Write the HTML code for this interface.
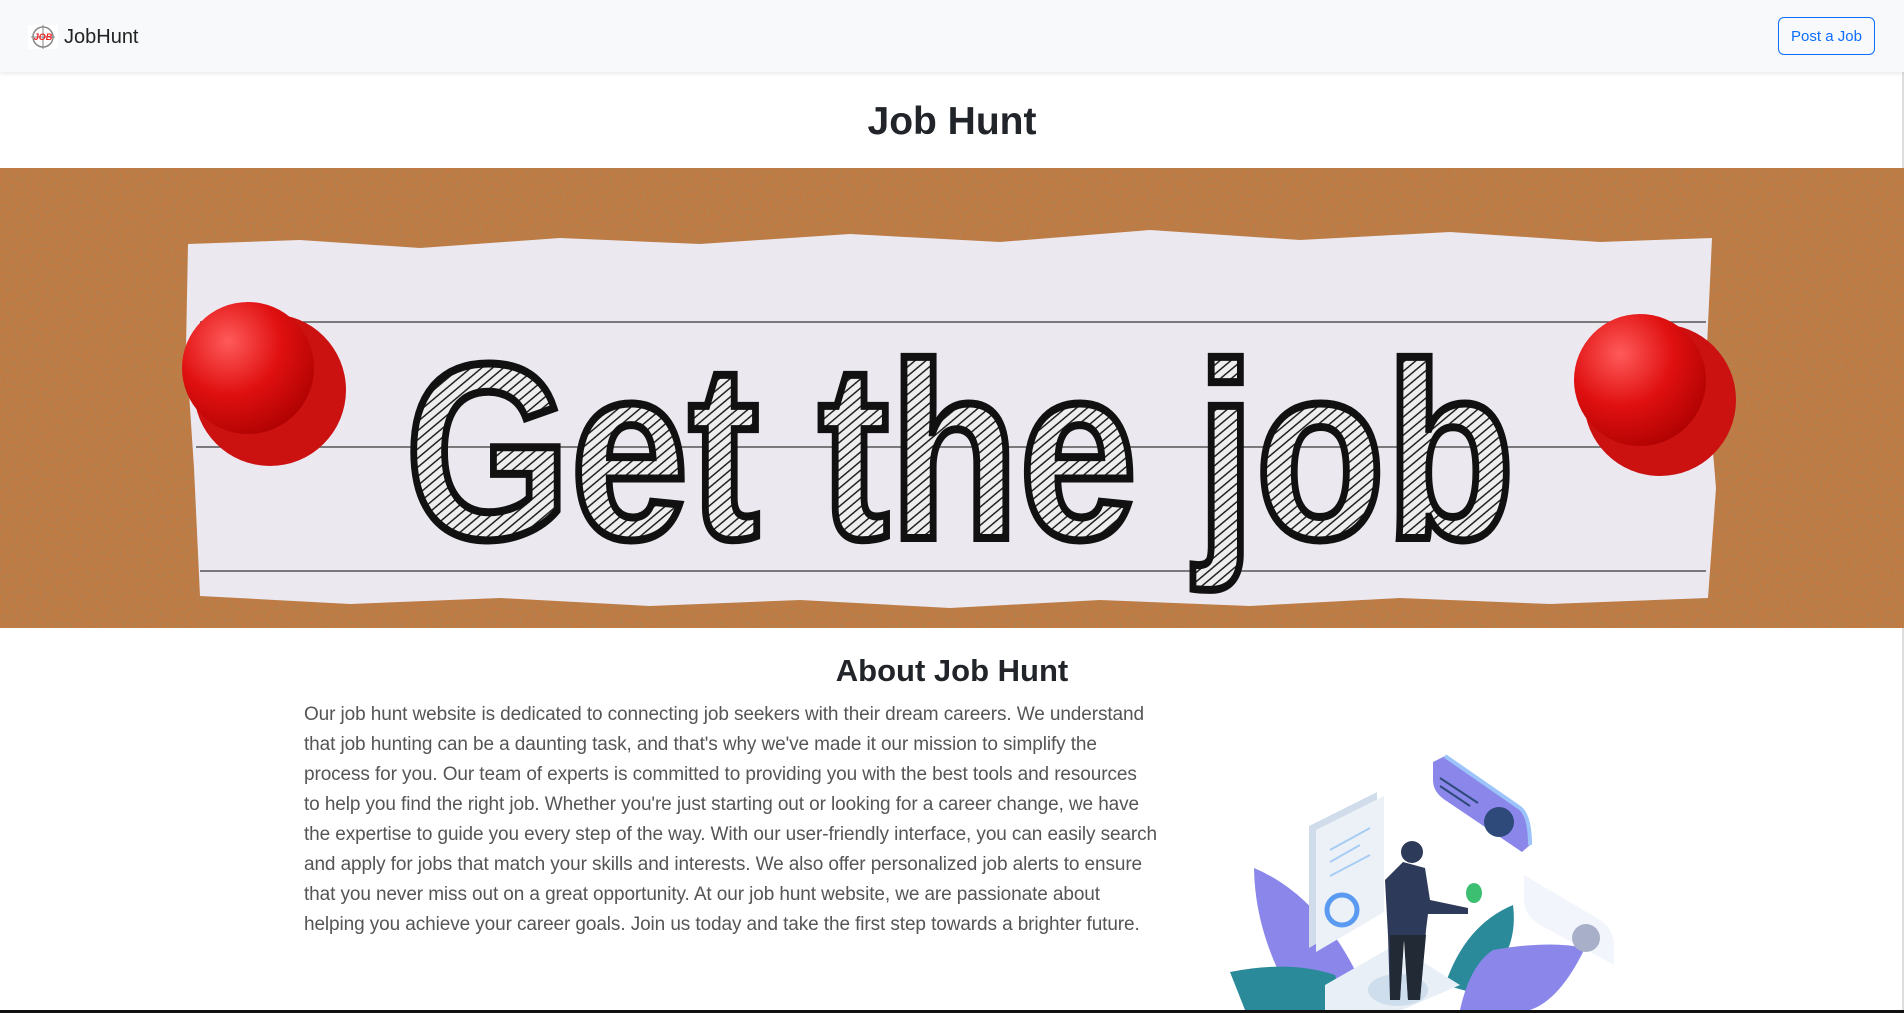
<!DOCTYPE html>
<html><head><meta charset="utf-8"><style>
*{box-sizing:border-box;margin:0;padding:0}
body{width:1904px;height:1013px;overflow:hidden;background:#fff;font-family:"Liberation Sans",sans-serif;color:#212529;position:relative;border-right:2px solid #ddd}
.nav{position:absolute;left:0;top:0;width:1904px;height:72px;background:#f8f9fa;box-shadow:0 2px 4px rgba(0,0,0,.08)}
.brand{position:absolute;left:28px;top:25px;display:flex;align-items:center;font-size:20px;color:#222}
.btn{position:absolute;left:1778px;top:17px;width:97px;height:38px;border:1px solid #0d6efd;border-radius:6px;color:#0d6efd;font-size:15px;display:flex;align-items:center;justify-content:center}
h1{position:absolute;top:97px;left:0;width:1904px;text-align:center;font-size:39px;font-weight:bold;line-height:50px}
.banner{position:absolute;top:168px;left:0}
h2{position:absolute;top:651px;left:292px;width:1320px;text-align:center;font-size:31px;font-weight:bold;line-height:40px}
.p{position:absolute;left:304px;top:700px;font-size:19px;line-height:30px;color:#555;white-space:nowrap;letter-spacing:-0.1px}
.ill{position:absolute;left:1220px;top:740px}
.bot{position:absolute;left:0;top:1010px;width:1904px;height:3px;background:#111}
</style></head><body>
<div class="nav">
 <div class="brand"><svg width="30" height="24" viewBox="0 0 30 24"><rect width="30" height="24" fill="#fff"/><circle cx="15" cy="12" r="10" fill="none" stroke="#888" stroke-width="1.5"/><line x1="15" y1="0" x2="15" y2="24" stroke="#888"/><line x1="3" y1="12" x2="27" y2="12" stroke="#888"/><text x="15" y="15" font-size="9" font-weight="bold" font-style="italic" fill="#e22" text-anchor="middle" font-family="Liberation Sans">JOB</text></svg><span style="margin-left:6px">JobHunt</span></div>
 <div class="btn">Post a Job</div>
</div>
<h1>Job Hunt</h1>
<svg class="banner" width="1904" height="460" viewBox="0 0 1904 460">
 <defs>
  <filter id="cork" x="0" y="0" width="100%" height="100%"><feTurbulence type="fractalNoise" baseFrequency="0.3" numOctaves="2" seed="3"/><feColorMatrix values="0 0 0 0 0.45  0 0 0 0 0.22  0 0 0 0 0.08  0 0 0 -2.2 1.4"/></filter>
  <pattern id="hatch" width="7" height="7" patternUnits="userSpaceOnUse" patternTransform="rotate(50)"><rect width="7" height="7" fill="#eee"/><line x1="0" y1="0" x2="0" y2="7" stroke="#222" stroke-width="3"/></pattern>
  <radialGradient id="pin" cx="0.35" cy="0.3" r="0.8"><stop offset="0" stop-color="#ff5a5a"/><stop offset="0.5" stop-color="#e01010"/><stop offset="1" stop-color="#a00"/></radialGradient>
 </defs>
 <rect width="1904" height="460" fill="#c07a42"/>
 <rect width="1904" height="460" filter="url(#cork)"/>
 <path d="M188 76 L300 72 L420 80 L560 70 L700 76 L850 66 L1000 74 L1150 62 L1300 72 L1450 64 L1600 74 L1712 70 L1706 200 L1716 320 L1708 430 L1550 436 L1400 430 L1250 438 L1100 432 L950 440 L800 432 L650 438 L500 430 L350 436 L200 428 L194 300 L186 180 Z" fill="#ece8f0"/>
 <g stroke="#555" stroke-width="1.5"><line x1="200" y1="154" x2="1706" y2="154"/><line x1="196" y1="279" x2="1710" y2="279"/><line x1="200" y1="403" x2="1706" y2="403"/></g>
 <text x="405" y="370" font-size="250" font-weight="bold" font-family="Liberation Sans" textLength="1110" lengthAdjust="spacingAndGlyphs" fill="url(#hatch)" stroke="#111" stroke-width="8">Get the job</text>
 <circle cx="270" cy="222" r="76" fill="#c11"/><circle cx="248" cy="200" r="66" fill="url(#pin)"/>
 <circle cx="1660" cy="232" r="76" fill="#c11"/><circle cx="1640" cy="212" r="66" fill="url(#pin)"/>
</svg>
<h2>About Job Hunt</h2>
<div class="p">Our job hunt website is dedicated to connecting job seekers with their dream careers. We understand<br>that job hunting can be a daunting task, and that's why we've made it our mission to simplify the<br>process for you. Our team of experts is committed to providing you with the best tools and resources<br>to help you find the right job. Whether you're just starting out or looking for a career change, we have<br>the expertise to guide you every step of the way. With our user-friendly interface, you can easily search<br>and apply for jobs that match your skills and interests. We also offer personalized job alerts to ensure<br>that you never miss out on a great opportunity. At our job hunt website, we are passionate about<br>helping you achieve your career goals. Join us today and take the first step towards a brighter future.</div>
<svg class="ill" width="420" height="270" viewBox="1220 740 420 270">
 <path d="M1254 868 Q1330 900 1372 1008 L1300 1010 Q1255 940 1254 868Z" fill="#8b87ea"/>
 <path d="M1230 972 Q1290 960 1335 975 L1345 1010 L1245 1010Z" fill="#2a8a9a"/>
 <path d="M1513 905 Q1520 960 1470 992 L1445 985 Q1465 925 1513 905Z" fill="#2a8a9a"/>
 <path d="M1493 950 Q1550 940 1585 948 Q1560 1000 1530 1010 L1460 1010 Q1470 965 1493 950Z" fill="#8b87ea"/>
 <path d="M1524 875 L1600 920 Q1614 930 1614 945 L1614 965 L1540 925 Q1524 915 1524 900Z" fill="#f2f5fb"/>
 <circle cx="1586" cy="938" r="14" fill="#a7b0c8"/>
 <path d="M1309 826 L1377 792 L1377 908 L1309 948Z" fill="#d0dcea"/>
 <path d="M1316 830 L1384 796 L1384 912 L1316 952Z" fill="#ecf1f8"/>
 <circle cx="1342" cy="910" r="15" fill="none" stroke="#5a9af0" stroke-width="5"/>
 <g stroke="#a8cdf5" stroke-width="2"><line x1="1330" y1="850" x2="1370" y2="828"/><line x1="1330" y1="862" x2="1360" y2="845"/><line x1="1330" y1="876" x2="1370" y2="855"/></g>
 <path d="M1325 985 L1395 945 L1460 985 L1395 1013 L1325 1013Z" fill="#e8eff6"/>
 <ellipse cx="1398" cy="990" rx="30" ry="16" fill="#cfdeec"/>
 <path d="M1433 762 L1445 756 L1520 808 Q1530 816 1530 830 L1530 845 L1522 852 L1445 800 Q1433 792 1433 780Z" fill="#8b87ea"/>
 <path d="M1445 756 L1520 808 Q1530 816 1530 845" fill="none" stroke="#9cc4fb" stroke-width="4"/>
 <g stroke="#2d4a7a" stroke-width="2"><line x1="1440" y1="778" x2="1478" y2="803"/><line x1="1440" y1="786" x2="1470" y2="806"/></g>
 <circle cx="1499" cy="822" r="15" fill="#2d4a7a"/>
 <path d="M1403 862 L1425 868 L1430 900 L1468 908 L1468 914 L1428 914 L1426 930 L1420 1000 L1408 1000 L1404 935 L1400 1000 L1390 1000 L1388 935 L1385 880 Z" fill="#2e3a5a"/>
 <path d="M1390 935 L1426 935 L1420 1000 L1408 1000 L1404 940 L1400 1000 L1390 1000Z" fill="#222a36"/>
 <circle cx="1412" cy="852" r="11" fill="#2e3a5a"/>
 <ellipse cx="1474" cy="893" rx="8" ry="10" fill="#3cbf70"/>
</svg>
<div class="bot"></div>
</body></html>
